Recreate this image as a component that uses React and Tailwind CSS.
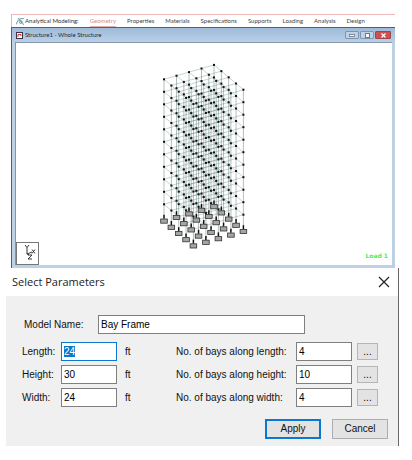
import { useEffect, useRef } from "react";

const MENU = ["Geometry", "Properties", "Materials", "Specifications", "Supports", "Loading", "Analysis", "Design"];

const BAYS = 4;
const LEVELS = 11;
const point = (i, j, k) => [14 + i * 12.5 + j * 7.35, 19.3 - i * 3.6 + j * 6.2 + k * 12.5];

function Frame() {
  const columns = [];
  const beams = [];
  const nodes = [];
  const supports = [];
  for (let j = 0; j <= BAYS; j++) {
    for (let i = BAYS; i >= 0; i--) {
      const [x, top] = point(i, j, 0);
      const [, bottom] = point(i, j, LEVELS);
      columns.push(`M${x} ${top}V${bottom}`);
      supports.push([x, bottom]);
      for (let k = 0; k < LEVELS; k++) {
        const p = point(i, j, k);
        nodes.push(p);
        if (i < BAYS) beams.push(`M${p}L${point(i + 1, j, k)}`);
        if (j < BAYS) beams.push(`M${p}L${point(i, j + 1, k)}`);
      }
    }
  }
  return (
    <svg width="108" height="192" viewBox="0 0 108 192" role="img" aria-label="Bay frame">
      <path d={beams.join("")} stroke="#6f8f8b" strokeWidth="0.4" fill="none" />
      <path d={columns.join("")} stroke="#62807c" strokeWidth="0.5" fill="none" />
      {nodes.map(([x, y], n) => (
        <rect key={n} x={x - 1} y={y - 1} width="2" height="2" fill="#111" />
      ))}
      {supports.map(([x, y], n) => (
        <g key={n}>
          <path d={`M${x} ${y - 2}V${y + 2}`} stroke="#111" strokeWidth="1.5" />
          <rect x={x - 3.3} y={y + 2.2} width="6.6" height="4.2" fill="#a5a5a5" stroke="#333" strokeWidth="0.8" />
        </g>
      ))}
    </svg>
  );
}

function NavBar() {
  return (
    <nav className="flex h-3 items-center border-l border-[#e5b5b5] pl-1 font-['Lato',sans-serif] text-[6px] leading-[10px] whitespace-nowrap text-[#444]">
      <svg className="shrink-0" width="9" height="9" viewBox="0 0 16 16" fill="none" stroke="#38798b" strokeWidth="1.4" aria-hidden="true">
        <path d="M1 13C2 6 6 2 14 3M5 7c2-2 6-1 6 2s-4 3-5 1 3-3 5 0l3 4M3 4l3-2" />
      </svg>
      <span className="mr-[11px] text-[#333]">Analytical Modeling:</span>
      <div className="flex gap-[11px]">
        {MENU.map((m, n) => (
          <a key={m} href="#" className={n === 0 ? "border-b border-[#dfb0ac] text-[#cf8f8b]" : ""}>
            {m}
          </a>
        ))}
      </div>
    </nav>
  );
}

function ModelWindow() {
  return (
    <section className="border-t border-l border-[#53606c] bg-[#bdd0e4] pb-[3px]">
      <header className="flex h-3.5 items-center bg-linear-to-b from-[#9fbbd9] to-[#b8cfe8] pl-1 pr-1">
        <svg width="7" height="7" viewBox="0 0 14 14" aria-hidden="true">
          <rect x="1" y="1" width="12" height="12" fill="#fff" stroke="#3d3048" strokeWidth="2" />
          <path d="M4 10V5h6v3" stroke="#c33" strokeWidth="2" fill="none" />
        </svg>
        <h1 className="ml-0.5 flex-1 font-['Lato',sans-serif] text-[6px] leading-[10px] text-[#1d2733]">
          Structure1 - Whole Structure
        </h1>
        <button aria-label="Minimize" className="flex h-2 w-3.5 items-center justify-center rounded-[1px] border border-[#8096ae] bg-[#bfd1e5]">
          <svg width="6" height="3" viewBox="0 0 6 3"><rect x=".5" y=".5" width="5" height="2" fill="#fff" stroke="#66788c" strokeWidth=".8" /></svg>
        </button>
        <button aria-label="Restore" className="ml-px flex h-2 w-3.5 items-center justify-center rounded-[1px] border border-[#8096ae] bg-[#bfd1e5]">
          <svg width="5" height="5" viewBox="0 0 5 5"><rect x=".5" y=".5" width="4" height="4" fill="#fff" stroke="#66788c" /></svg>
        </button>
        <button aria-label="Close" className="ml-px flex h-2 w-4 items-center justify-center rounded-[1px] border border-[#a04648] bg-[#cf514e]">
          <svg width="5" height="5" viewBox="0 0 5 5"><path d="M.5 .5l4 4M4.500 .5l-4 4" stroke="#fff" strokeWidth="1.2" /></svg>
        </button>
      </header>
      <div className="relative mr-[3px] ml-[3px] flex h-[223px] justify-center border-t border-l border-[#8797a8] bg-white pt-[17px]">
        <Frame />
        <svg className="absolute bottom-0 left-0" width="23" height="23" viewBox="0 0 23 23" fill="none" stroke="#222" strokeWidth="0.9" role="img" aria-label="Axes Y X Z">
          <rect x="0.5" y="0.5" width="22" height="22" fill="#fff" stroke="#777" strokeWidth="1" />
          <path d="M9 3l2 2.500 2-2.500M11 5.500V12l5-2M16 7.500l3 4M19 7.500l-3 4M11 12l2 1M12 13h4l-4 4h4" />
        </svg>
        <span className="absolute right-1 bottom-1 font-['DejaVu_Sans',sans-serif] text-[6px] leading-[10px] font-bold text-[#55e84c]">Load 1</span>
      </div>
    </section>
  );
}

const FIELD = "h-[19px] w-full border border-[#7f7f7f] bg-white px-0.5 text-black outline-none";

const ROWS = [
  { id: "length", label: "Length:", value: "24", bays: "4" },
  { id: "height", label: "Height:", value: "30", bays: "10" },
  { id: "width", label: "Width:", value: "24", bays: "4" },
];

function Row({ row, inputRef }) {
  return (
    <>
      <label htmlFor={row.id}>{row.label}</label>
      <input
        id={row.id}
        ref={inputRef}
        defaultValue={row.value}
        className={`${FIELD} selection:bg-[#0a78d0] selection:text-white focus:border-[#0a78d0]`}
      />
      <span className="pl-2">ft</span>
      <label htmlFor={`${row.id}-bays`} className="whitespace-nowrap">{`No. of bays along ${row.id}:`}</label>
      <input id={`${row.id}-bays`} defaultValue={row.bays} className={FIELD} />
      <button aria-label={`Edit ${row.id} bays`} className="ml-[5px] h-[17px] border border-[#b5b5b5] bg-[#e3e3e3] leading-3">
        ...
      </button>
    </>
  );
}

function ParametersDialog() {
  const first = useRef(null);
  useEffect(() => {
    first.current.focus();
    first.current.select();
  }, []);
  return (
    <section className="mr-[13px] ml-1.5 border-r border-[#666]">
      <header className="flex h-7 items-center justify-between pr-2 pl-1.5">
        <h2 className="font-['Open_Sans','Noto_Sans',sans-serif] text-[11px] text-[#222]">Select Parameters</h2>
        <button aria-label="Close dialog">
          <svg width="12" height="12" viewBox="0 0 12 12" stroke="#222" strokeWidth="1.2"><path d="M1 1l10 10M11 1L1 11" /></svg>
        </button>
      </header>
      <form className="bg-[#f0f0f0] pt-[19px] pr-5 pb-[7px] pl-4 font-['Liberation_Sans',sans-serif] text-[10px] text-[#111]">
        <div className="flex items-center pr-[73px] pl-0.5">
          <label htmlFor="model" className="w-[74px]">Model Name:</label>
          <input id="model" defaultValue="Bay Frame" className="h-[19px] min-w-0 flex-1 border border-[#7f7f7f] bg-white px-0.5 text-black outline-none" />
        </div>
        <div className="mt-2 grid grid-cols-[39px_56px_1fr_120px_56px_26px] items-center gap-y-1">
          {ROWS.map((row, n) => (
            <Row key={row.id} row={row} inputRef={n === 0 ? first : undefined} />
          ))}
        </div>
        <div className="mt-3 -mr-2.5 flex justify-end gap-[11px]">
          <button type="button" className="h-5 w-14 border-2 border-[#0a78d0] bg-[#e3e3e3] leading-4">Apply</button>
          <button type="button" className="h-5 w-14 border border-[#adadad] bg-[#e3e3e3] leading-4">Cancel</button>
        </div>
      </form>
    </section>
  );
}

export default function App() {
  return (
    <main className="bg-white pt-3.5 pb-3">
      <div className="mr-[17px] ml-[11px]">
        <div className="h-px bg-[#eeb9b9]" />
        <NavBar />
        <ModelWindow />
      </div>
      <ParametersDialog />
    </main>
  );
}
